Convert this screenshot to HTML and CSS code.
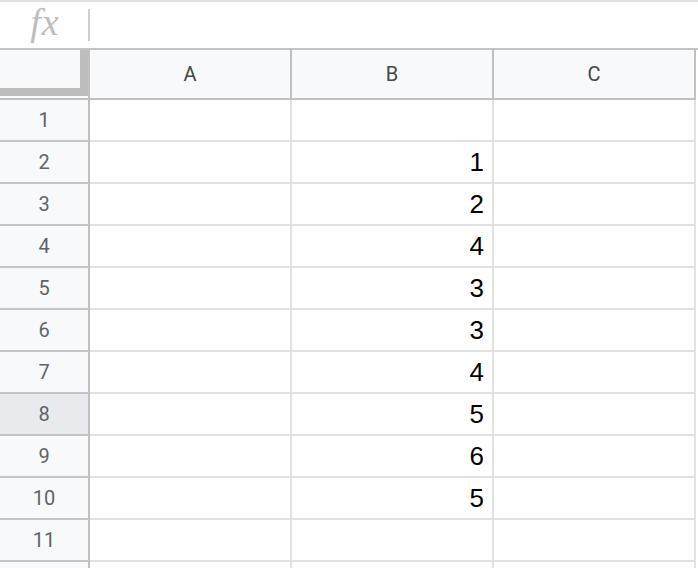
FILE: index.html
```html
<!DOCTYPE html>
<html>
<head>
<meta charset="utf-8">
<link rel="stylesheet" href="styles.css">
</head>
<body>
<div class="formula-bar">
  <div class="fx">fx</div>
  <div class="fx-sep"></div>
</div>
<div class="sheet">
  <div class="corner"><div class="corner-inner"></div></div>
  <div class="col-head">A</div>
  <div class="col-head">B</div>
  <div class="col-head">C</div>

  <div class="row-head">1</div><div class="cell"></div><div class="cell"></div><div class="cell"></div>
  <div class="row-head">2</div><div class="cell"></div><div class="cell num">1</div><div class="cell"></div>
  <div class="row-head">3</div><div class="cell"></div><div class="cell num">2</div><div class="cell"></div>
  <div class="row-head">4</div><div class="cell"></div><div class="cell num">4</div><div class="cell"></div>
  <div class="row-head">5</div><div class="cell"></div><div class="cell num">3</div><div class="cell"></div>
  <div class="row-head">6</div><div class="cell"></div><div class="cell num">3</div><div class="cell"></div>
  <div class="row-head">7</div><div class="cell"></div><div class="cell num">4</div><div class="cell"></div>
  <div class="row-head sel">8</div><div class="cell"></div><div class="cell num">5</div><div class="cell"></div>
  <div class="row-head">9</div><div class="cell"></div><div class="cell num">6</div><div class="cell"></div>
  <div class="row-head">10</div><div class="cell"></div><div class="cell num">5</div><div class="cell"></div>
  <div class="row-head">11</div><div class="cell"></div><div class="cell"></div><div class="cell"></div>
  <div class="row-head last"></div><div class="cell last"></div><div class="cell last"></div><div class="cell last"></div>
</div>
</body>
</html>
```
FILE: styles.css
```css
html, body {
  margin: 0;
  padding: 0;
  background: #ffffff;
}
body {
  width: 698px;
  height: 568px;
  overflow: hidden;
  font-family: Roboto, "Liberation Sans", Arial, sans-serif;
}
.formula-bar {
  box-sizing: border-box;
  height: 50px;
  border-top: 2px solid #e1e1e3;
  border-bottom: 2px solid #c4c4c4;
  display: flex;
  align-items: center;
}
.fx {
  width: 86px;
  padding-left: 2px;
  text-align: center;
  font-family: "Liberation Serif", "DejaVu Serif", serif;
  font-style: italic;
  font-size: 38px;
  line-height: 42px;
  color: #bdbdbd;
  letter-spacing: 1px;
  padding-bottom: 6px;
}
.fx-sep {
  width: 2px;
  height: 32px;
  background: #cfcfcf;
}
.sheet {
  display: grid;
  grid-template-columns: 90px 202px 202px 202px;
  grid-template-rows: 50px repeat(11, 42px) 6px;
}
.corner {
  box-sizing: border-box;
  background: #f8f9fa;
  border-right: 2px solid #c0c0c0;
  border-bottom: 2px solid #c0c0c0;
  padding-bottom: 2px;
}
.corner-inner {
  box-sizing: border-box;
  height: 46px;
  border-right: 8px solid #bdbdbd;
  border-bottom: 8px solid #bdbdbd;
}
.col-head {
  box-sizing: border-box;
  background: #f8f9fa;
  border-right: 2px solid #c0c0c0;
  border-bottom: 2px solid #c0c0c0;
  display: flex;
  align-items: center;
  justify-content: center;
  font-size: 20px;
  color: #444746;
}
.row-head {
  box-sizing: border-box;
  background: #f8f9fa;
  border-right: 2px solid #c0c0c0;
  border-bottom: 2px solid #c4c4c4;
  display: flex;
  align-items: center;
  justify-content: center;
  font-size: 20px;
  color: #5f6368;
}
.row-head.sel {
  background: #e8eaed;
}
.cell {
  box-sizing: border-box;
  border-right: 2px solid #e2e2e2;
  border-bottom: 2px solid #e2e2e2;
  display: flex;
  align-items: center;
}
.cell.num {
  justify-content: flex-end;
  padding-right: 8px;
  font-family: "Liberation Sans", Arial, sans-serif;
  font-size: 26px;
  color: #000000;
}
.last {
  border-bottom: none;
}
```
